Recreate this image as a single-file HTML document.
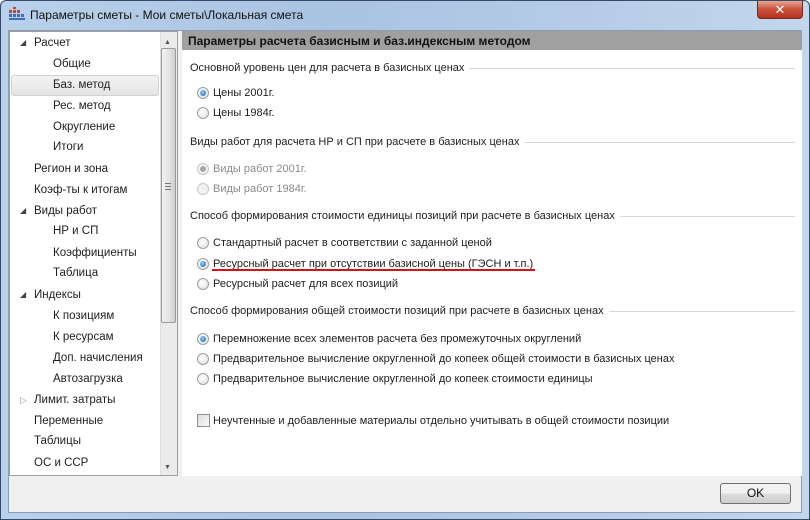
<!DOCTYPE html>
<html><head><meta charset="utf-8"><style>
*{margin:0;padding:0;box-sizing:border-box}
body{width:810px;height:520px;overflow:hidden;font-family:"Liberation Sans","DejaVu Sans",sans-serif;font-size:11px;color:#1e1e1e;position:relative;background:#fff}
.frame{position:absolute;left:0;top:0;width:810px;height:520px;border:1px solid #344a68;border-radius:6px 6px 0 0;background:linear-gradient(90deg,#b9d1ea 0%,#a9c3e2 40%,#b5cbe6 70%,#c3d6ec 100%)}
.t{position:absolute;white-space:nowrap;line-height:14px}
.client{position:absolute;left:8px;top:30px;width:794px;height:483px;background:#f0f0f0;border:1px solid #8a9bb5}
.tree{position:absolute;left:9px;top:31px;width:169px;height:445px;background:#fff;border:1px solid #a0a0a0}
.sel{position:absolute;left:11px;top:75px;width:148px;height:21px;background:linear-gradient(#f3f3f3,#e4e4e4);border:1px solid #d0d0d0;border-radius:3px}
.sb{position:absolute;left:160px;top:32px;width:17px;height:443px;background:#ebebeb;border-left:1px solid #e0e0e0}
.thumb{position:absolute;left:161px;top:48px;width:15px;height:275px;background:linear-gradient(90deg,#f4f4f4,#e0e0e0 60%,#cfcfcf);border:1px solid #999;border-radius:2px}
.right{position:absolute;left:182px;top:31px;width:620px;height:445px;background:#fff}
.hdr{position:absolute;left:182px;top:31px;width:620px;height:19px;background:#a0a0a0}
.rb{position:absolute;width:12px;height:12px;border-radius:50%;border:1px solid #a0a0a0;background:radial-gradient(circle at 40% 40%,#fff,#ddd)}
.rb.on::after{content:"";position:absolute;left:2px;top:2px;width:6px;height:6px;border-radius:50%;background:radial-gradient(circle at 40% 35%,#8ed0ff,#1b5fa8)}
.rb.dis{border-color:#c8c8c8;background:#f2f2f2}
.rb.dis.on::after{background:#a8a8a8}
.grp{position:absolute;left:190px;width:605px;display:flex;align-items:center;white-space:nowrap;line-height:14px}
.grp::after{content:"";flex:1;height:1px;background:#d8d8d8;margin-left:5px}
.g{color:#8a8a8a}
.tr{font-size:11.5px}
</style></head><body>
<div class="frame"></div>
<svg style="position:absolute;left:9px;top:7px" width="16" height="14"><g fill="#d04030"><rect x="0" y="3" width="3" height="3"/><rect x="4" y="3" width="3" height="3"/><rect x="8" y="3" width="3" height="3"/><rect x="4" y="0" width="3" height="2"/></g><g fill="#3a6fc8"><rect x="0" y="7" width="3" height="3"/><rect x="4" y="7" width="3" height="3"/><rect x="8" y="7" width="3" height="3"/><rect x="12" y="7" width="3" height="3"/><rect x="0" y="11" width="16" height="2"/></g></svg>
<div class="t" style="left:30px;top:8px;font-size:12px;color:#111">Параметры сметы - Мои сметы\Локальная смета</div>
<div style="position:absolute;left:757px;top:1px;width:46px;height:18px;border:1px solid #6b2a22;border-top:none;border-radius:0 0 4px 4px;background:linear-gradient(#e9a493,#c9503a 50%,#b8321e);color:#fff;text-align:center;font-weight:bold;font-size:13px;line-height:17px">✕</div>
<div class="client"></div>
<div class="tree"></div>
<div class="sel"></div>
<div class="sb"></div>
<div class="thumb"></div>
<div class="t" style="left:164px;top:36px;font-size:7px;color:#555">▲</div>
<div class="t" style="left:164px;top:461px;font-size:7px;color:#555">▼</div>
<div style="position:absolute;left:165px;top:183px;width:6px;height:7px;border-top:1px solid #777;border-bottom:1px solid #777"><div style="margin-top:2px;height:1px;background:#777"></div></div>
<div class="t" style="left:20px;top:36px;font-size:8px;color:#444">◢</div>
<div class="t" style="left:20px;top:204px;font-size:8px;color:#444">◢</div>
<div class="t" style="left:20px;top:288px;font-size:8px;color:#444">◢</div>
<div class="t" style="left:20px;top:393px;font-size:9px;color:#999">▷</div>
<div class="t tr" style="left:34px;top:36px">Расчет</div>
<div class="t tr" style="left:53px;top:57px">Общие</div>
<div class="t tr" style="left:53px;top:78px">Баз. метод</div>
<div class="t tr" style="left:53px;top:99px">Рес. метод</div>
<div class="t tr" style="left:53px;top:120px">Округление</div>
<div class="t tr" style="left:53px;top:140px">Итоги</div>
<div class="t tr" style="left:34px;top:162px">Регион и зона</div>
<div class="t tr" style="left:34px;top:183px">Коэф-ты к итогам</div>
<div class="t tr" style="left:34px;top:204px">Виды работ</div>
<div class="t tr" style="left:53px;top:224px">НР и СП</div>
<div class="t tr" style="left:53px;top:246px">Коэффициенты</div>
<div class="t tr" style="left:53px;top:266px">Таблица</div>
<div class="t tr" style="left:34px;top:288px">Индексы</div>
<div class="t tr" style="left:53px;top:309px">К позициям</div>
<div class="t tr" style="left:53px;top:330px">К ресурсам</div>
<div class="t tr" style="left:53px;top:351px">Доп. начисления</div>
<div class="t tr" style="left:53px;top:372px">Автозагрузка</div>
<div class="t tr" style="left:34px;top:393px">Лимит. затраты</div>
<div class="t tr" style="left:34px;top:414px">Переменные</div>
<div class="t tr" style="left:34px;top:434px">Таблицы</div>
<div class="t tr" style="left:34px;top:456px">ОС и ССР</div>
<div class="right"></div>
<div class="hdr"></div>
<div class="t" style="left:188px;top:34px;font-weight:bold;font-size:12px;color:#111">Параметры расчета базисным и баз.индексным методом</div>

<div class="grp" style="top:61px">Основной уровень цен для расчета в базисных ценах</div>
<div class="rb on" style="left:197px;top:87px"></div><div class="t" style="left:213px;top:86px">Цены 2001г.</div>
<div class="rb" style="left:197px;top:107px"></div><div class="t" style="left:213px;top:106px">Цены 1984г.</div>

<div class="grp" style="top:135px">Виды работ для расчета НР и СП при расчете в базисных ценах</div>
<div class="rb dis on" style="left:197px;top:163px"></div><div class="t g" style="left:213px;top:162px">Виды работ 2001г.</div>
<div class="rb dis" style="left:197px;top:183px"></div><div class="t g" style="left:213px;top:182px">Виды работ 1984г.</div>

<div class="grp" style="top:209px">Способ формирования стоимости единицы позиций при расчете в базисных ценах</div>
<div class="rb" style="left:197px;top:237px"></div><div class="t" style="left:213px;top:236px">Стандартный расчет в соответствии с заданной ценой</div>
<div class="rb on" style="left:197px;top:258px"></div><div class="t" style="left:213px;top:257px">Ресурсный расчет при отсутствии базисной цены (ГЭСН и т.п.)</div>
<div style="position:absolute;left:212px;top:269px;width:323px;height:2px;background:#d8101c"></div>
<div class="rb" style="left:197px;top:278px"></div><div class="t" style="left:213px;top:277px">Ресурсный расчет для всех позиций</div>

<div class="grp" style="top:304px">Способ формирования общей стоимости позиций при расчете в базисных ценах</div>
<div class="rb on" style="left:197px;top:333px"></div><div class="t" style="left:213px;top:332px">Перемножение всех элементов расчета без промежуточных округлений</div>
<div class="rb" style="left:197px;top:353px"></div><div class="t" style="left:213px;top:352px">Предварительное вычисление округленной до копеек общей стоимости в базисных ценах</div>
<div class="rb" style="left:197px;top:373px"></div><div class="t" style="left:213px;top:372px">Предварительное вычисление округленной до копеек стоимости единицы</div>

<div style="position:absolute;left:197px;top:414px;width:13px;height:13px;border:1px solid #8e8f8f;background:linear-gradient(135deg,#ddd,#f8f8f8)"></div>
<div class="t" style="left:213px;top:414px">Неучтенные и добавленные материалы отдельно учитывать в общей стоимости позиции</div>

<div style="position:absolute;left:720px;top:483px;width:71px;height:21px;border:1px solid #707070;border-radius:3px;background:linear-gradient(#f2f2f2 50%,#dddddd 50%,#cfcfcf);text-align:center;line-height:19px;color:#111;font-size:12px">OK</div>
</body></html>
